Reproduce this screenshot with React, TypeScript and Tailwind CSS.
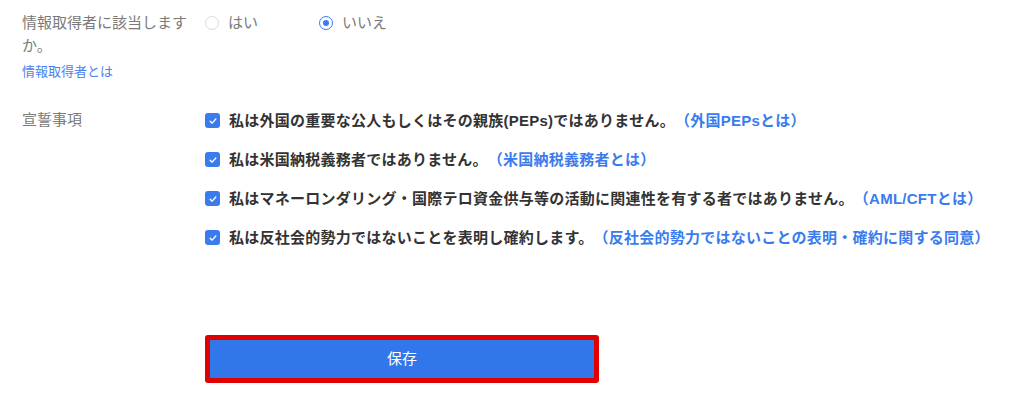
import { useState } from 'react'

const pledges = [
  { text: '私は外国の重要な公人もしくはその親族(PEPs)ではありません。', link: '（外国PEPsとは）' },
  { text: '私は米国納税義務者ではありません。', link: '（米国納税義務者とは）' },
  {
    text: '私はマネーロンダリング・国際テロ資金供与等の活動に関連性を有する者ではありません。',
    link: '（AML/CFTとは）',
  },
  {
    text: '私は反社会的勢力ではないことを表明し確約します。',
    link: '（反社会的勢力ではないことの表明・確約に関する同意）',
  },
]

function Radio({ checked, label, onClick }: { checked: boolean; label: string; onClick: () => void }) {
  return (
    <button type="button" onClick={onClick} className="flex w-[114px] items-center gap-[9px] text-left">
      <span
        className={
          checked
            ? 'grid h-[14px] w-[14px] place-items-center rounded-full border border-[#3b7cf0] bg-white'
            : 'grid h-[14px] w-[14px] place-items-center rounded-full border border-[#dcdcdc] bg-white'
        }
      >
        {checked && <span className="h-[6px] w-[6px] rounded-full bg-[#3b7cf0]" />}
      </span>
      <span className="text-[15px] leading-[23px] text-[#7a7a7a]">{label}</span>
    </button>
  )
}

function Check() {
  return (
    <span className="grid h-[15px] w-[15px] shrink-0 place-items-center rounded-[3px] bg-[#3a7bee]">
      <svg viewBox="0 0 12 12" className="h-[10px] w-[10px]" fill="none">
        <path d="M2.6 6.2 L5 8.6 L9.4 3.6" stroke="white" strokeWidth="1.6" strokeLinecap="round" strokeLinejoin="round" />
      </svg>
    </span>
  )
}

export default function App() {
  const [isInfoTaker, setIsInfoTaker] = useState(false)

  return (
    <div
      className="h-[420px] w-[1024px] bg-white pl-[22px] pt-[11px] [text-spacing-trim:space-all]"
      style={{ fontFamily: '"Liberation Sans", "Noto Sans CJK JP", sans-serif' }}
    >
      <div className="grid grid-cols-[183px_1fr]">
        <div>
          <p className="w-[172px] text-[15px] leading-[23px] text-[#7a7a7a]">情報取得者に該当しますか。</p>
          <a className="mt-[5px] block text-[13px] leading-[20px] text-[#4a82ee]">情報取得者とは</a>
        </div>
        <div className="flex items-start">
          <Radio checked={isInfoTaker} label="はい" onClick={() => setIsInfoTaker(true)} />
          <Radio checked={!isInfoTaker} label="いいえ" onClick={() => setIsInfoTaker(false)} />
        </div>

        <p className="mt-[26px] text-[15px] leading-[23px] text-[#7a7a7a]">宣誓事項</p>
        <div className="mt-[27px] flex flex-col gap-[16px]">
          {pledges.map((pledge) => (
            <div key={pledge.text} className="flex items-center gap-[9px]">
              <Check />
              <p className="whitespace-nowrap text-[15px] font-bold leading-[23px] tracking-[0.25px] text-[#333333]">
                {pledge.text}
                <a className="text-[#3a7cee]">{pledge.link}</a>
              </p>
            </div>
          ))}
        </div>

        <div />
        <div className="mt-[86px]">
          <button
            type="button"
            className="h-[48px] w-[394px] rounded-[3px] border-[5px] border-[#e00000] bg-[#3177ea] text-[15px] text-white"
          >
            保存
          </button>
        </div>
      </div>
    </div>
  )
}
